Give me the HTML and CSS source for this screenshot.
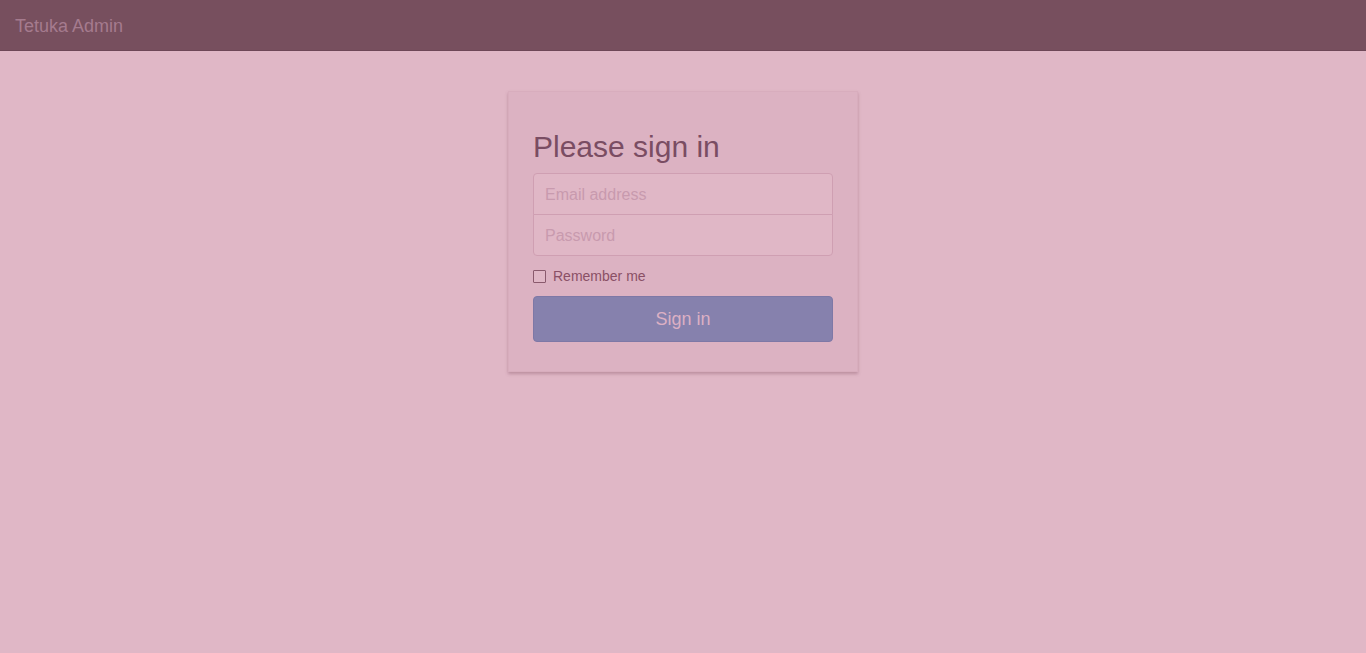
FILE: index.html
```html
<!DOCTYPE html>
<html>
<head>
<meta charset="utf-8">
<title>Tetuka Admin</title>
<link rel="stylesheet" href="styles.css">
</head>
<body>
<nav class="navbar"><span class="brand">Tetuka Admin</span></nav>
<main class="main">
  <form class="card">
    <h2 class="title">Please sign in</h2>
    <div class="fields">
      <input class="input input-top" type="email" placeholder="Email address">
      <input class="input input-bottom" type="password" placeholder="Password">
    </div>
    <label class="remember"><span class="box"></span>Remember me</label>
    <button class="btn" type="button">Sign in</button>
  </form>
</main>
</body>
</html>
```
FILE: styles.css
```css
* { box-sizing: border-box; }
html, body { margin: 0; padding: 0; height: 100%; }
body {
  background: #e0b7c6;
  font-family: "Liberation Sans", Arial, sans-serif;
  font-size: 14px;
  color: #7a4d63;
}
.navbar {
  height: 51px;
  background: #774f5e;
  border-bottom: 1px solid #6e4757;
  display: flex;
  align-items: center;
  padding: 2px 15px 0;
}
.brand {
  font-size: 18px;
  color: #a57b8e;
}
.main {
  display: flex;
  justify-content: center;
  padding-top: 40px;
}
.card {
  width: 350px;
  background: #dcb2c2;
  border: 1px solid #d8adbd;
  box-shadow: 0 2px 3px rgba(120, 70, 90, 0.35);
  padding: 38px 24px 29px;
  display: flex;
  flex-direction: column;
}
.title {
  margin: 0 0 10px;
  font-size: 30px;
  font-weight: normal;
  line-height: 33px;
  color: #7a4d63;
}
.fields { display: flex; flex-direction: column; }
.input {
  height: 42px;
  width: 100%;
  border: 1px solid #cf9fb2;
  background: #e0b7c6;
  font-family: "Liberation Sans", Arial, sans-serif;
  font-size: 16px;
  padding: 11px 11px 9px;
  color: #7a4d63;
  outline: none;
}
.input::placeholder { color: #c89aae; }
.input-top { border-radius: 4px 4px 0 0; }
.input-bottom { border-radius: 0 0 4px 4px; margin-top: -1px; }
.remember {
  display: flex;
  align-items: center;
  margin-top: 13px;
  height: 14px;
  font-size: 14px;
  color: #8a5066;
}
.box {
  width: 13px;
  height: 13px;
  border: 1px solid #8a5a6d;
  background: #e0b7c6;
  margin-right: 7px;
  border-radius: 1px;
}
.btn {
  margin-top: 13px;
  height: 46px;
  width: 100%;
  border: 1px solid #7e78a6;
  border-radius: 4px;
  background: #8681ad;
  color: #dcb0c4;
  font-family: "Liberation Sans", Arial, sans-serif;
  font-size: 18px;
}
```
